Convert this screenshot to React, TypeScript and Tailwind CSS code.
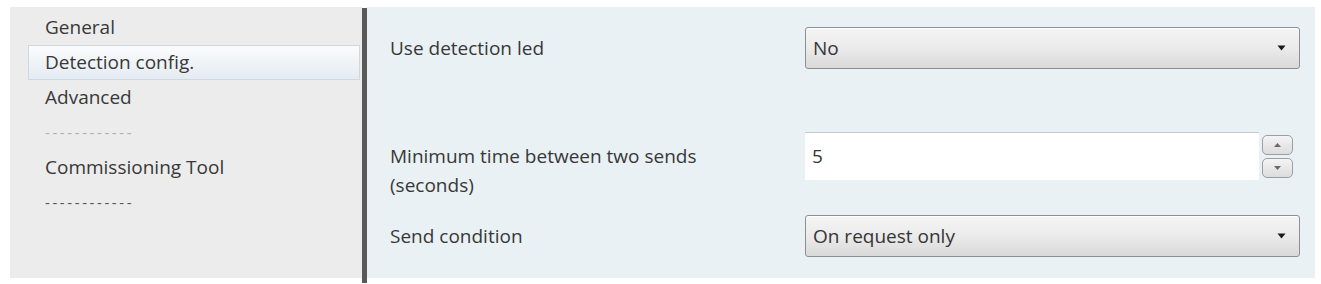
const font = { fontFamily: '"Open Sans", "Noto Sans", sans-serif' };

function Caret() {
  return (
    <svg width="9" height="6" viewBox="0 0 9 6" className="shrink-0">
      <path d="M0.5 0.5 L8.5 0.5 L4.5 5.5 Z" fill="#1a1a1a" />
    </svg>
  );
}

function Dropdown({ value }: { value: string }) {
  return (
    <div className="flex h-[42px] w-[495px] items-center justify-between rounded-[3px] border border-[#8d9092] bg-gradient-to-b from-[#f5f5f5] via-[#ebebeb] to-[#d9d9d9] pl-[7px] pr-[13px] shadow-[inset_0_1px_0_#ffffff]">
      <span className="text-[19px] text-[#353535]">{value}</span>
      <Caret />
    </div>
  );
}

function SpinButton({ up }: { up?: boolean }) {
  return (
    <div className="flex h-[20px] w-[31px] items-center justify-center rounded-[5px] border border-[#9a9fa3] bg-gradient-to-b from-[#f4f4f4] to-[#dcdcdc]">
      <svg width="7" height="4" viewBox="0 0 7 4">
        <path d={up ? "M0 4 L7 4 L3.5 0 Z" : "M0 0 L7 0 L3.5 4 Z"} fill="#6a6a6a" />
      </svg>
    </div>
  );
}

function NumberInput({ value }: { value: string }) {
  return (
    <div className="flex h-[48px] w-[495px] items-center">
      <div className="flex h-full flex-1 items-center border-t border-[#c6ccd0] bg-white pl-[7px]">
        <span className="text-[19px] text-[#353535]">{value}</span>
      </div>
      <div className="flex h-full flex-col justify-center gap-[3px] pl-[3px] pr-[7px]">
        <SpinButton up />
        <SpinButton />
      </div>
    </div>
  );
}

const navItems = [
  { label: "General" },
  { label: "Detection config.", active: true },
  { label: "Advanced" },
  { label: "------------", faint: true },
  { label: "Commissioning Tool" },
  { label: "------------" },
];

export default function App() {
  return (
    <div
      className="flex h-[284px] w-[1321px] bg-white pb-[6px] pl-[10px] pr-[6px] pt-[7px]"
      style={font}
    >
      <div className="flex w-[352px] flex-col bg-[#ececec] pt-[3px]">
        {navItems.map((item) => (
          <div
            key={item.label}
            className={
              item.active
                ? "ml-[18px] mr-[2px] flex h-[35px] items-center border border-[#cfd8df] bg-gradient-to-b from-[#fbfcfd] to-[#e4ebf1] pl-[16px]"
                : "ml-[18px] flex h-[35px] items-center pl-[17px]"
            }
          >
            <span
              className={
                item.faint
                  ? "text-[15px] tracking-[2.6px] text-[#b0b0b0]"
                  : item.label.startsWith("-")
                    ? "text-[15px] tracking-[2.6px] text-[#555555]"
                    : "text-[19px] text-[#383838]"
              }
            >
              {item.label}
            </span>
          </div>
        ))}
      </div>

      <div className="mt-[1px] h-[275px] w-[5px] bg-[#595959]" />

      <div className="flex flex-1 flex-col bg-[#e9f1f4] pl-[23px] pt-[20px]">
        <div className="flex h-[42px] items-center">
          <div className="w-[415px] text-[19px] text-[#383838]">Use detection led</div>
          <Dropdown value="No" />
        </div>

        <div className="mt-[63px] flex h-[48px]">
          <div className="w-[415px] pt-[10px] text-[19px] leading-[29px] text-[#383838]">
            Minimum time between two sends
            <br />
            (seconds)
          </div>
          <NumberInput value="5" />
        </div>

        <div className="mt-[35px] flex h-[42px] items-center">
          <div className="w-[415px] text-[19px] text-[#383838]">Send condition</div>
          <Dropdown value="On request only" />
        </div>
      </div>
    </div>
  );
}
